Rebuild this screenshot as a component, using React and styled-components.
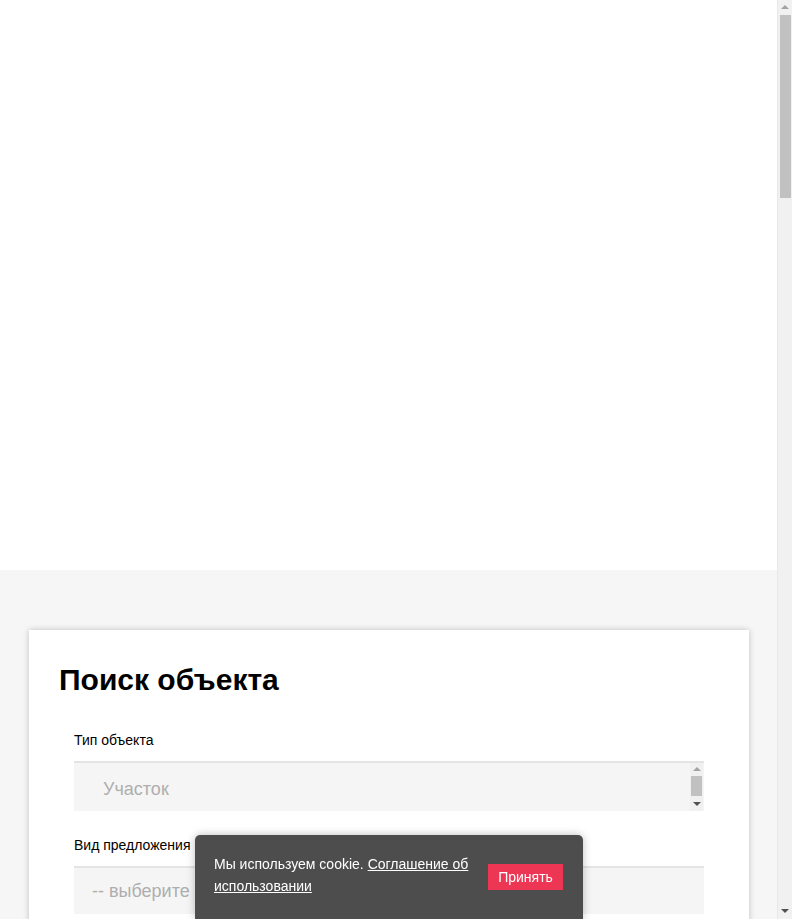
import React from "react";
import styled, { createGlobalStyle } from "styled-components";

const Global = createGlobalStyle`
  html, body { margin: 0; padding: 0; }
  body {
    font-family: "Liberation Sans", Arial, sans-serif;
    color: #000;
    background: #fff;
  }
`;

const Page = styled.div`
  margin-right: 15px;
`;

const MapArea = styled.div`
  height: 570px;
  background: #fff;
`;

const Section = styled.section`
  background: #f6f6f6;
  min-height: 3890px;
  padding: 60px 28px 60px 29px;
  box-sizing: border-box;
`;

const Card = styled.div`
  background: #fff;
  box-shadow: 0 0 6px rgba(0, 0, 0, 0.22);
  padding: 33px 30px 40px;
`;

const Title = styled.h2`
  margin: 0 0 35px;
  font-size: 30px;
  line-height: 34px;
  font-weight: 700;
`;

const Form = styled.form`
  display: flex;
  flex-direction: column;
  gap: 26px;
  padding: 0 15px;
`;

const Field = styled.div`
  display: flex;
  flex-direction: column;
`;

const Label = styled.label`
  font-size: 14px;
  line-height: 16px;
  margin-bottom: 13px;
`;

const Box = styled.div`
  position: relative;
  height: ${(p) => p.$h}px;
  box-sizing: border-box;
  border-top: 2px solid #e4e4e4;
  background: #f5f5f5;
  display: flex;
  align-items: center;
  padding-left: ${(p) => p.$pad}px;
  padding-top: ${(p) => p.$top || 0}px;
  font-size: 18px;
  color: #aeaeae;
`;

const ListScroll = styled.div`
  position: absolute;
  right: 1px;
  top: 0;
  bottom: 0;
  width: 13px;
  background: #f0f0f0;
  display: flex;
  flex-direction: column;
  align-items: center;
  justify-content: space-between;
  padding: 4px 0 5px;
  box-sizing: border-box;
`;

const Arrow = styled.div`
  width: 0;
  height: 0;
  border-left: 4px solid transparent;
  border-right: 4px solid transparent;
  ${(p) =>
    p.$up
      ? "border-bottom: 4px solid #a3a3a3;"
      : "border-top: 4px solid #505050;"}
`;

const Thumb = styled.div`
  width: 11px;
  height: 20px;
  background: #c1c1c1;
  margin-top: -2px;
`;

const PageScrollbar = styled.div`
  position: fixed;
  top: 0;
  right: 0;
  bottom: 0;
  width: 15px;
  background: #f1f1f1;
  border-left: 1px solid #e8e8e8;
  box-sizing: border-box;
  display: flex;
  flex-direction: column;
  align-items: center;
  padding: 5px 0 6px;
`;

const PageThumb = styled.div`
  width: 11px;
  height: 183px;
  background: #c1c1c1;
  margin-top: 6px;
  margin-left: 1px;
`;

const Spacer = styled.div`
  flex: 1;
`;

const Cookie = styled.div`
  position: fixed;
  left: 195px;
  bottom: 0;
  width: 388px;
  box-sizing: border-box;
  background: #4d4d4d;
  border-radius: 5px 5px 0 0;
  box-shadow: 0 0 8px rgba(0, 0, 0, 0.25);
  padding: 18px 20px 22px 19px;
  display: flex;
  align-items: center;
  justify-content: space-between;
  color: #fff;
`;

const CookieText = styled.p`
  margin: 0;
  width: 262px;
  font-size: 14px;
  line-height: 22px;
  a {
    color: #fff;
    text-decoration: underline;
  }
`;

const AcceptButton = styled.button`
  margin-top: 4px;
  background: #ec3654;
  color: #fff;
  border: 0;
  height: 26px;
  width: 75px;
  padding: 0;
  font-family: inherit;
  font-size: 14px;
  cursor: pointer;
`;

export default function App() {
  return (
    <>
      <Global />
      <Page>
        <MapArea />
        <Section>
          <Card>
            <Title>Поиск объекта</Title>
            <Form>
              <Field>
                <Label>Тип объекта</Label>
                <Box $h={50} $pad={29} $top={5}>
                  Участок
                  <ListScroll>
                    <Arrow $up />
                    <Thumb />
                    <Arrow />
                  </ListScroll>
                </Box>
              </Field>
              <Field>
                <Label>Вид предложения</Label>
                <Box $h={48} $pad={18}>
                  -- выберите значение
                </Box>
              </Field>
            </Form>
          </Card>
        </Section>
      </Page>
      <PageScrollbar>
        <Arrow $up />
        <PageThumb />
        <Spacer />
        <Arrow />
      </PageScrollbar>
      <Cookie>
        <CookieText>
          Мы используем cookie. <a href="#">Соглашение об использовании</a>
        </CookieText>
        <AcceptButton type="button">Принять</AcceptButton>
      </Cookie>
    </>
  );
}
